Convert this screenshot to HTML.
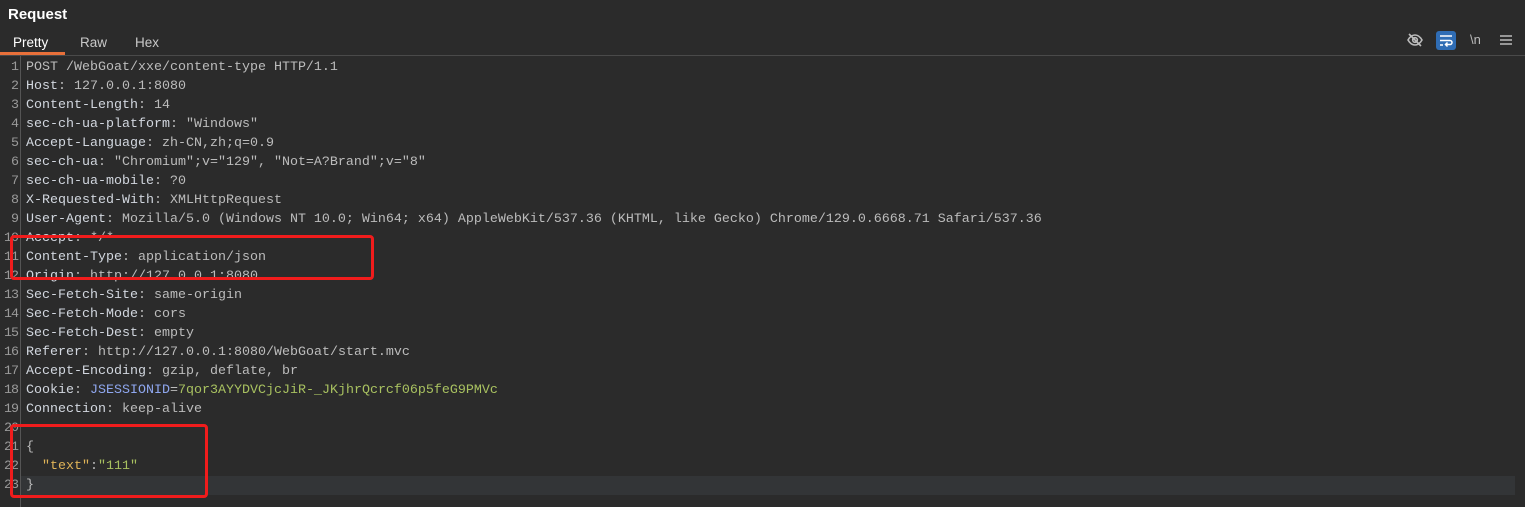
<!DOCTYPE html>
<html><head><meta charset="utf-8"><style>
body{margin:0;width:1525px;height:507px;background:#2b2b2b;overflow:hidden;font-family:"Liberation Sans",sans-serif;position:relative}
.title{position:absolute;left:8px;top:6px;color:#fff;font-weight:bold;font-size:15px}
.tabs{position:absolute;left:0;top:32px;width:1525px;height:23px;border-bottom:1px solid #4a4a4a}
.tab{position:absolute;top:3px;color:#c8c8c8;font-size:13.5px}
.ul{position:absolute;left:0;top:52px;width:65px;height:3px;background:#e8703a}
.gutter{position:absolute;left:20px;top:56px;width:1px;height:451px;background:#555}
.code{position:absolute;left:0;top:58px;font-family:"Liberation Mono",monospace;font-size:13.33px;line-height:19px;color:#bcbcbc;white-space:pre;font-weight:normal}
.ln{display:inline-block;width:18px;text-align:right;color:#9a9a9a;margin-right:8px;letter-spacing:-1px}
.k{color:#d2d7df}
.b{color:#8fa7ef}
.g{color:#a8c160}
.y{color:#e0b458}
.hl{position:absolute;left:21px;top:476px;width:1494px;height:19px;background:#333537}
.box{position:absolute;border:3px solid #f01c1c;border-radius:4px}
</style></head><body>
<div class="title">Request</div>
<div class="tabs">
<span class="tab" style="left:13px;color:#fff">Pretty</span>
<span class="tab" style="left:80px">Raw</span>
<span class="tab" style="left:135px">Hex</span>
</div>
<div class="ul"></div>
<svg style="position:absolute;left:1406px;top:31px" width="18" height="18" viewBox="0 0 18 18" fill="none" stroke="#bbb" stroke-width="1.6"><path d="M2 9c2-3.5 4.5-5 7-5s5 1.5 7 5c-2 3.5-4.5 5-7 5s-5-1.5-7-5z"/><circle cx="9" cy="9" r="2.3"/><path d="M3 3l12 12"/></svg>
<div style="position:absolute;left:1436px;top:31px;width:20px;height:19px;background:#2f6db5;border-radius:3px"></div>
<svg style="position:absolute;left:1436px;top:31px" width="20" height="19" viewBox="0 0 20 19" fill="none" stroke="#fff" stroke-width="1.5"><path d="M4 5h12M4 9.5h10a2 2 0 0 1 0 4h-4M4 14h3"/><path d="M11.5 11.5l-2 2 2 2"/></svg>
<span style="position:absolute;left:1470px;top:32px;color:#bbb;font-size:13px">\n</span>
<svg style="position:absolute;left:1499px;top:33px" width="14" height="14" viewBox="0 0 14 14" stroke="#bbb" stroke-width="1.6"><path d="M1 3h12M1 7h12M1 11h12"/></svg>
<div class="hl"></div>
<div class="gutter"></div>
<div class="code"><span class="ln">1</span>POST /WebGoat/xxe/content-type HTTP/1.1
<span class="ln">2</span><span class="k">Host</span>: 127.0.0.1:8080
<span class="ln">3</span><span class="k">Content-Length</span>: 14
<span class="ln">4</span><span class="k">sec-ch-ua-platform</span>: "Windows"
<span class="ln">5</span><span class="k">Accept-Language</span>: zh-CN,zh;q=0.9
<span class="ln">6</span><span class="k">sec-ch-ua</span>: "Chromium";v="129", "Not=A?Brand";v="8"
<span class="ln">7</span><span class="k">sec-ch-ua-mobile</span>: ?0
<span class="ln">8</span><span class="k">X-Requested-With</span>: XMLHttpRequest
<span class="ln">9</span><span class="k">User-Agent</span>: Mozilla/5.0 (Windows NT 10.0; Win64; x64) AppleWebKit/537.36 (KHTML, like Gecko) Chrome/129.0.6668.71 Safari/537.36
<span class="ln">10</span><span class="k">Accept</span>: */*
<span class="ln">11</span><span class="k">Content-Type</span>: application/json
<span class="ln">12</span><span class="k">Origin</span>: http://127.0.0.1:8080
<span class="ln">13</span><span class="k">Sec-Fetch-Site</span>: same-origin
<span class="ln">14</span><span class="k">Sec-Fetch-Mode</span>: cors
<span class="ln">15</span><span class="k">Sec-Fetch-Dest</span>: empty
<span class="ln">16</span><span class="k">Referer</span>: http://127.0.0.1:8080/WebGoat/start.mvc
<span class="ln">17</span><span class="k">Accept-Encoding</span>: gzip, deflate, br
<span class="ln">18</span><span class="k">Cookie</span>: <span class="b">JSESSIONID</span>=<span class="g">7qor3AYYDVCjcJiR-_JKjhrQcrcf06p5feG9PMVc</span>
<span class="ln">19</span><span class="k">Connection</span>: keep-alive
<span class="ln">20</span>
<span class="ln">21</span>{
<span class="ln">22</span>  <span class="y">"text"</span>:<span class="g">"111"</span>
<span class="ln">23</span>}</div>
<div class="box" style="left:10px;top:235px;width:358px;height:39px"></div>
<div class="box" style="left:10px;top:424px;width:192px;height:68px"></div>
</body></html>
